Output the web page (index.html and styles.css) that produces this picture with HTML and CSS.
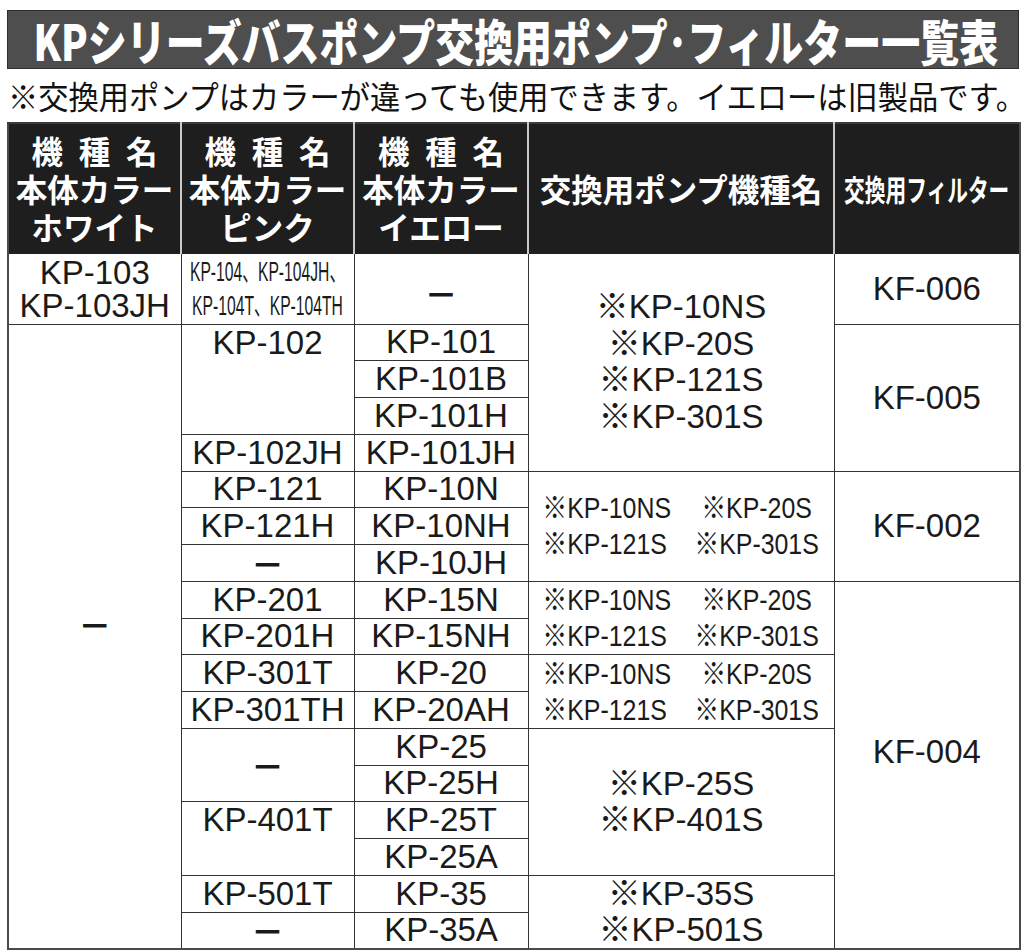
FILE: index.html
```html
<!DOCTYPE html>
<html lang="ja">
<head>
<meta charset="utf-8">
<title>KPシリーズバスポンプ交換用ポンプ・フィルター一覧表</title>
<link rel="stylesheet" href="styles.css">
</head>
<body>
<div class="page">
  <div class="title"><span class="title-text">KPシリーズバスポンプ交換用ポンプ･フィルター一覧表</span></div>
  <div class="note"><span class="note-text">※交換用ポンプはカラーが違っても使用できます。イエローは旧製品です。</span></div>
  <table class="list">
    <colgroup>
      <col class="c1"><col class="c2"><col class="c3"><col class="c4"><col class="c5">
    </colgroup>
    <thead>
      <tr class="head">
        <th>機&ensp;種&ensp;名<br>本体カラー<br>ホワイト</th>
        <th>機&ensp;種&ensp;名<br>本体カラー<br>ピンク</th>
        <th>機&ensp;種&ensp;名<br>本体カラー<br>イエロー</th>
        <th>交換用ポンプ機種名</th>
        <th><div class="fit"><span class="hsq">交換用フィルター</span></div></th>
      </tr>
    </thead>
    <tbody>
      <tr class="ra">
        <td class="two">KP-103<br>KP-103JH</td>
        <td><div class="fit"><span class="sm">KP-104、KP-104JH、<br>KP-104T、KP-104TH</span></div></td>
        <td class="dash low">－</td>
        <td rowspan="5" class="four">※KP-10NS<br>※KP-20S<br>※KP-121S<br>※KP-301S</td>
        <td>KF-006</td>
      </tr>
      <tr class="r">
        <td rowspan="17" class="dash bigdash">－</td>
        <td rowspan="3" class="top">KP-102</td>
        <td>KP-101</td>
        <td rowspan="4">KF-005</td>
      </tr>
      <tr class="r"><td>KP-101B</td></tr>
      <tr class="r"><td>KP-101H</td></tr>
      <tr class="r"><td>KP-102JH</td><td>KP-101JH</td></tr>
      <tr class="r">
        <td>KP-121</td><td>KP-10N</td>
        <td rowspan="3"><div class="fit"><div class="pairs"><span>※KP-10NS</span><span>※KP-20S</span><span>※KP-121S</span><span>※KP-301S</span></div></div></td>
        <td rowspan="3">KF-002</td>
      </tr>
      <tr class="r"><td>KP-121H</td><td>KP-10NH</td></tr>
      <tr class="r"><td class="dash">－</td><td>KP-10JH</td></tr>
      <tr class="r">
        <td>KP-201</td><td>KP-15N</td>
        <td rowspan="2"><div class="fit"><div class="pairs"><span>※KP-10NS</span><span>※KP-20S</span><span>※KP-121S</span><span>※KP-301S</span></div></div></td>
        <td rowspan="10" class="kf004">KF-004</td>
      </tr>
      <tr class="r"><td>KP-201H</td><td>KP-15NH</td></tr>
      <tr class="r">
        <td>KP-301T</td><td>KP-20</td>
        <td rowspan="2"><div class="fit"><div class="pairs"><span>※KP-10NS</span><span>※KP-20S</span><span>※KP-121S</span><span>※KP-301S</span></div></div></td>
      </tr>
      <tr class="r"><td>KP-301TH</td><td>KP-20AH</td></tr>
      <tr class="r">
        <td rowspan="2" class="dash">－</td><td>KP-25</td>
        <td rowspan="4" class="stack">※KP-25S<br>※KP-401S</td>
      </tr>
      <tr class="r"><td>KP-25H</td></tr>
      <tr class="r"><td rowspan="2" class="top">KP-401T</td><td>KP-25T</td></tr>
      <tr class="r"><td>KP-25A</td></tr>
      <tr class="r">
        <td>KP-501T</td><td>KP-35</td>
        <td rowspan="2" class="stack">※KP-35S<br>※KP-501S</td>
      </tr>
      <tr class="r"><td class="dash">－</td><td>KP-35A</td></tr>
    </tbody>
  </table>
</div>
</body>
</html>
```

FILE: styles.css
```css
html, body {
  margin: 0;
  padding: 0;
  background: #ffffff;
  overflow: hidden;
}

body {
  font-family: "Liberation Sans", "Noto Sans CJK JP", sans-serif;
  color: #1a1a1a;
}

.page {
  padding: 10px 0 0 7px;
  width: 1012px;
}

.title {
  box-sizing: border-box;
  width: 1012px;
  height: 59px;
  background: #4e4e4e;
  border: 1px solid #2e2e2e;
  display: flex;
  justify-content: center;
  align-items: center;
  overflow: hidden;
}

.title-text {
  flex-shrink: 0;
  white-space: nowrap;
  font-family: "Noto Sans CJK JP", sans-serif;
  font-weight: 900;
  font-size: 49px;
  line-height: 1;
  color: #ffffff;
  margin-left: 6px;
  transform: scaleX(0.795);
}

.note {
  width: 1012px;
  height: 53px;
  display: flex;
  align-items: center;
  overflow: hidden;
}

.note-text {
  flex-shrink: 0;
  white-space: nowrap;
  font-family: "Noto Sans CJK JP", sans-serif;
  font-size: 32px;
  line-height: 1;
  color: #111111;
  margin-left: 1px;
  margin-top: -2px;
  transform: scaleX(0.945);
  transform-origin: left center;
}

.list {
  width: 1012px;
  table-layout: fixed;
  border-collapse: collapse;
  border: 2px solid #4a4a4a;
}

col.c1 { width: 173px; }
col.c2 { width: 173px; }
col.c3 { width: 174px; }
col.c4 { width: 306px; }
col.c5 { width: 186px; }

tr.head { height: 130px; }
tr.ra { height: 71px; }
tr.r { height: 36.75px; }

th {
  background: #1e1e1e;
  color: #ffffff;
  font-family: "Noto Sans CJK JP", sans-serif;
  font-weight: 700;
  font-size: 31.5px;
  line-height: 38px;
  padding: 0;
  text-align: center;
  vertical-align: middle;
  white-space: nowrap;
  border-left: 2px solid #c8c8c8;
  border-right: 2px solid #c8c8c8;
  border-top: 2px solid #3a3a3a;
  border-bottom: 1px solid #222222;
}

th:first-child { border-left: 2px solid #4a4a4a; }
th:last-child { border-right: 2px solid #4a4a4a; }

td {
  border: 1px solid #333333;
  padding: 0;
  text-align: center;
  vertical-align: middle;
  font-size: 33px;
  line-height: 34px;
  white-space: nowrap;
}

td.two { line-height: 33px; }
td.four { line-height: 36.5px; }
td.stack { line-height: 35.5px; }
td.top { vertical-align: top; padding-top: 1px; }
td.dash { font-family: "Noto Sans CJK JP", sans-serif; font-weight: 700; }
td.low { padding-top: 8px; }
td.bigdash { padding-bottom: 24px; }
td.kf004 { padding-bottom: 26px; }

.fit {
  display: flex;
  justify-content: center;
  overflow: hidden;
}

.fit > * {
  flex-shrink: 0;
  white-space: nowrap;
}

.sm {
  font-size: 28px;
  line-height: 34px;
  transform: scaleX(0.56);
}

.hsq {
  font-size: 30px;
  transform: scaleX(0.69);
}

.pairs {
  display: grid;
  grid-template-columns: auto auto;
  column-gap: 28px;
  font-size: 30px;
  line-height: 36px;
  transform: scaleX(0.83);
}

.pairs > span:nth-child(odd) { justify-self: start; }
.pairs > span:nth-child(even) { justify-self: center; }
```
